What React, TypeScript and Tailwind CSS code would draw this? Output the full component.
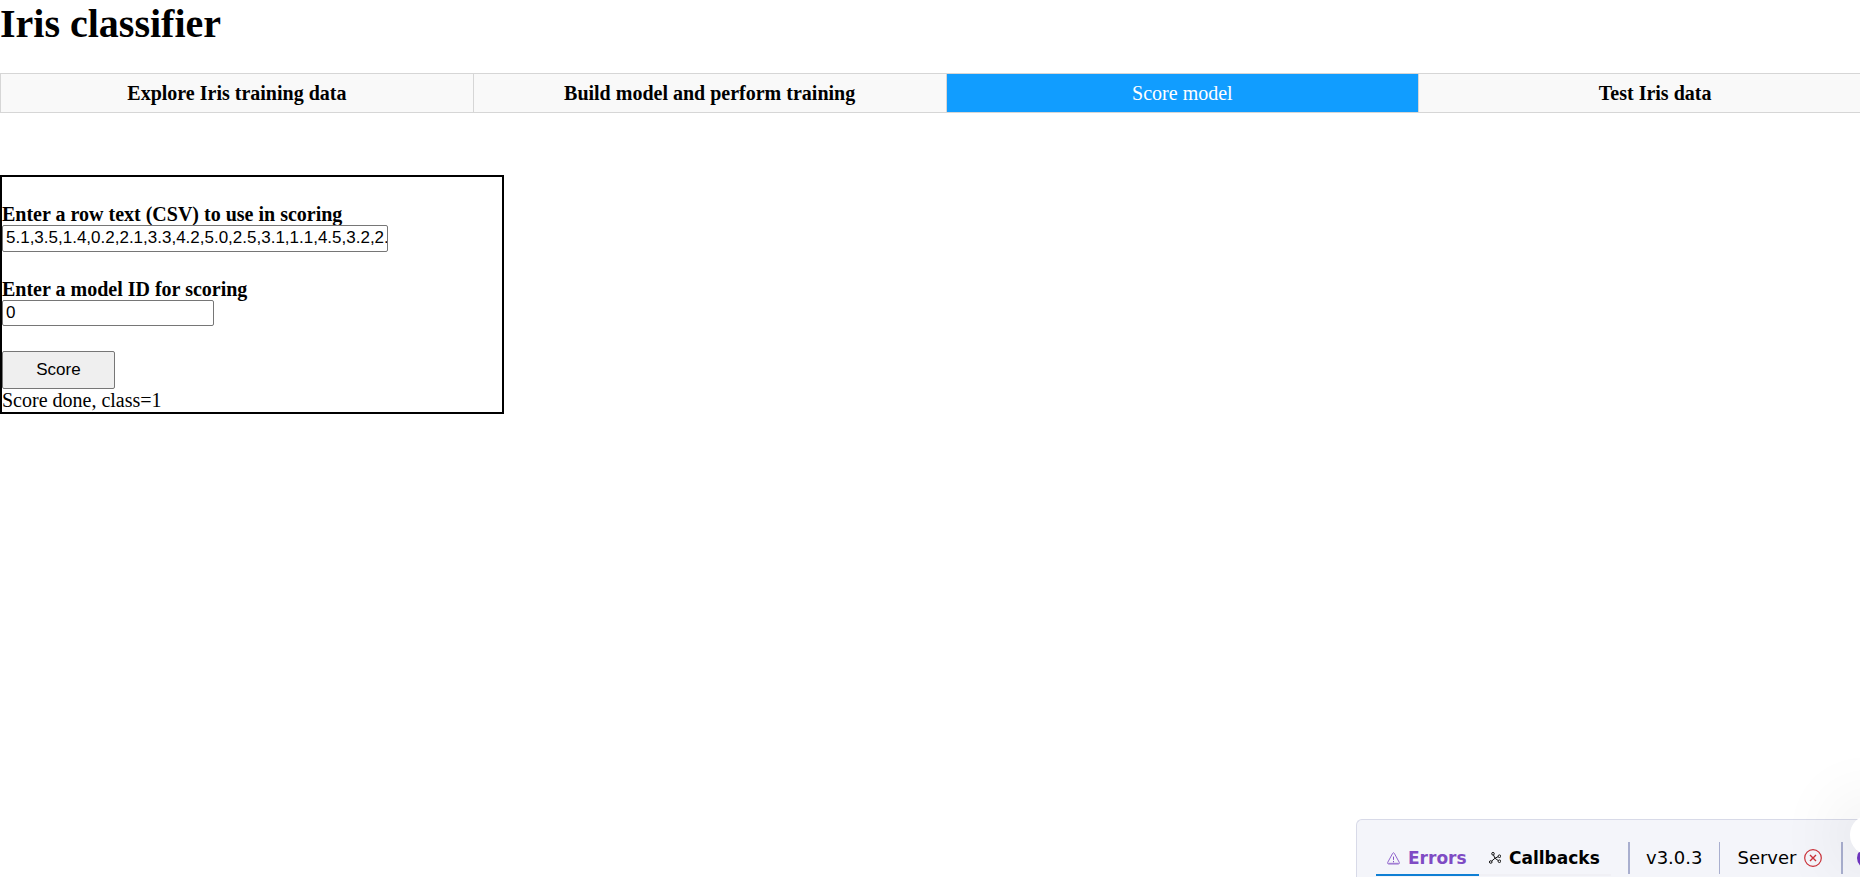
import { useState } from "react";

const tabs = [
  "Explore Iris training data",
  "Build model and perform training",
  "Score model",
  "Test Iris data",
];

function WarningIcon() {
  return (
    <svg className="h-[13px] w-[13px] shrink-0" viewBox="0 0 24 24" fill="none" stroke="#7f4bc4" strokeWidth="1.6" aria-hidden="true">
      <path d="M10.4 2.6 1.3 19.2a1.9 1.9 0 0 0 1.7 2.9h18a1.9 1.9 0 0 0 1.7-2.9L13.6 2.6a1.9 1.9 0 0 0-3.2 0Z" strokeLinejoin="round" />
      <path d="M12 8.5v6M12 16.5v2.5" strokeWidth="1.8" />
      <path d="M2.5 20.8h19" strokeWidth="1.8" opacity="0.6" />
    </svg>
  );
}

function GraphIcon() {
  return (
    <svg className="h-3 w-3 shrink-0" viewBox="0 0 24 24" fill="none" stroke="#111111" strokeWidth="2" aria-hidden="true">
      <circle cx="8" cy="3.5" r="2.6" />
      <circle cx="20.8" cy="8.5" r="2.6" />
      <circle cx="3.5" cy="20" r="2.6" />
      <circle cx="20.8" cy="18.5" r="2.6" />
      <path d="m9 6 3 6.5M18.2 9.3 12 12.5l-6.5 5.5M12 12.5l6.4 4.5" strokeWidth="2" />
    </svg>
  );
}

function ServerDownIcon() {
  return (
    <svg className="h-[18px] w-[18px] shrink-0" viewBox="0 0 18 18" fill="none" stroke="#cb3139" aria-hidden="true">
      <circle cx="9" cy="9" r="8.3" strokeWidth="1.2" />
      <path d="m6 6 6 6M12 6l-6 6" strokeWidth="1.4" />
    </svg>
  );
}

function DevTools() {
  return (
    <aside className="fixed bottom-0 right-0 flex h-[58px] w-[504px] items-start overflow-hidden rounded-tl-md border-l border-t border-[#d8dae8] bg-[#f4f5fa] pl-[19px] pt-[22px] font-['DejaVu_Sans',sans-serif] text-black">
      <button className="flex h-[34px] w-[103px] shrink-0 items-center gap-2 border-b-2 border-[#0f7fd4] pl-[11px] text-[17px] font-bold text-[#7f4bc4]">
        <WarningIcon />
        Errors
      </button>
      <button className="flex h-[34px] w-[132px] shrink-0 items-center gap-2 border-b-2 border-[#f0f0f5] pl-[10px] text-[17px] font-bold">
        <GraphIcon />
        Callbacks
      </button>
      <div className="ml-[17px] flex h-8 shrink-0 items-center border-l-2 border-[#a9afcf] pl-4 pr-[17px] text-lg">v3.0.3</div>
      <div className="flex h-8 shrink-0 items-center gap-2 border-l border-[#a9afcf] pl-[17px] pr-[19px] text-lg">
        Server
        <ServerDownIcon />
      </div>
      <div className="flex h-8 shrink-0 items-center border-l-2 border-[#a9afcf] pl-[14px]">
        <svg className="h-[22px] w-[22px]" viewBox="0 0 22 22" fill="none" stroke="#7035c2" strokeWidth="3" aria-hidden="true">
          <circle cx="11" cy="11" r="9.5" />
        </svg>
      </div>
    </aside>
  );
}

export default function App() {
  const [active, setActive] = useState(2);
  const [row, setRow] = useState("5.1,3.5,1.4,0.2,2.1,3.3,4.2,5.0,2.5,3.1,1.1,4.5,3.2,2.");
  const [modelId, setModelId] = useState("0");

  return (
    <div className="min-h-screen overflow-hidden bg-white font-['Liberation_Serif',serif] text-xl leading-[23px] text-black">
      <h1 className="text-[40px] font-bold leading-[48px]">Iris classifier</h1>

      <nav className="mt-[25px] flex h-10 w-[calc(100%+32px)] border border-[#d6d6d6]">
        {tabs.map((label, i) => (
          <button
            key={label}
            onClick={() => setActive(i)}
            className={
              i === active
                ? "flex-1 border-r border-[#d6d6d6] bg-[#119dff] text-white last:border-r-0"
                : "flex-1 border-r border-[#d6d6d6] bg-[#f9f9f9] font-bold last:border-r-0"
            }
          >
            {label}
          </button>
        ))}
      </nav>

      <main className="mt-[62px] flex w-[504px] max-w-full flex-col items-start border-2 border-black pt-[27px]">
        <label htmlFor="row" className="font-bold leading-[21px]">Enter a row text (CSV) to use in scoring</label>
        <input
          id="row"
          value={row}
          onChange={(e) => setRow(e.target.value)}
          className="h-[27px] w-[386px] rounded-xs border border-[#767676] bg-white pb-[2px] pl-[3px] font-['Liberation_Sans',sans-serif] text-[17px]"
        />
        <label htmlFor="model" className="mt-[27px] font-bold leading-[21px]">Enter a model ID for scoring</label>
        <input
          id="model"
          value={modelId}
          onChange={(e) => setModelId(e.target.value)}
          className="h-[26px] w-[212px] rounded-xs border border-[#767676] bg-white pl-[3px] font-['Liberation_Sans',sans-serif] text-[17px]"
        />
        <button className="mt-[25px] h-[38px] w-[113px] rounded-xs border border-[#767676] bg-[#efefef] pb-[2px] font-['Liberation_Sans',sans-serif] text-[17px]">
          Score
        </button>
        <p>Score done, class=1</p>
      </main>

      <DevTools />
      <div className="fixed bottom-[22px] -right-[30px] h-10 w-10 rounded-full bg-white shadow-[0_0_70px_8px_rgba(0,0,0,0.12)]" />
    </div>
  );
}
